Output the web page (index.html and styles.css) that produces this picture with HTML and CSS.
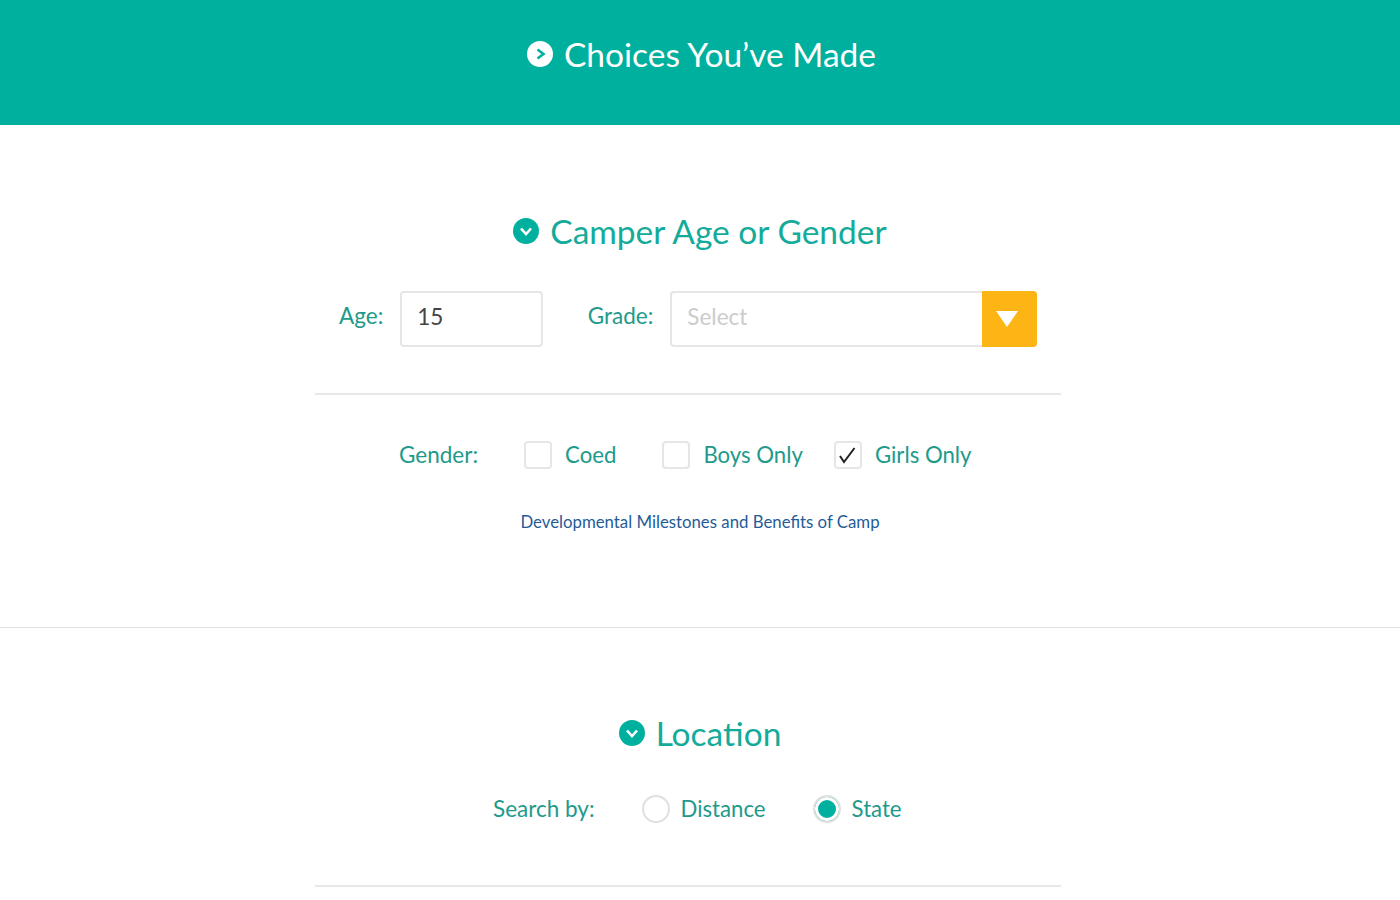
FILE: index.html
```html
<!DOCTYPE html>
<html>
<head>
    <title>Choices You've Made</title>
    <meta charset="UTF-8">
    <meta name="viewport" content="width=device-width, initial-scale=1.0">
    <link rel="stylesheet" href="styles.css">
</head>
<body>
    <header class="page-header">
        <svg class="title-icon" viewBox="0 0 26 26">
            <circle cx="13" cy="13" r="13" fill="#fff"/>
            <path d="M10.5 8.5l6 4.5-6 4.5" fill="none" stroke="#00b09e" stroke-width="2.6"/>
        </svg>
        <h1>Choices You’ve Made</h1>
    </header>

    <section class="section section-age">
        <div class="section-title">
            <svg class="title-icon" viewBox="0 0 26 26">
                <circle cx="13" cy="13" r="13" fill="#00b09e"/>
                <path d="M8 10.5l5 5.5 5-5.5" fill="none" stroke="#fff" stroke-width="2.6"/>
            </svg>
            <h2>Camper Age or Gender</h2>
        </div>

        <div class="panel">
            <div class="age-row">
                <label class="field-label" for="age">Age:</label>
                <input class="age-input" id="age" type="text" value="15">
                <label class="field-label grade-label">Grade:</label>
                <div class="grade-select">
                    <span class="placeholder">Select</span>
                    <span class="select-arrow"></span>
                </div>
            </div>
            <div class="gender-row">
                <span class="field-label gender-label">Gender:</span>
                <span class="check-item coed"><span class="checkbox"></span>Coed</span>
                <span class="check-item boys"><span class="checkbox"></span>Boys Only</span>
                <span class="check-item"><span class="checkbox">
                    <svg viewBox="0 0 28 28"><path d="M6 15l4 6L20.5 7" fill="none" stroke="#222" stroke-width="2"/></svg>
                </span>Girls Only</span>
            </div>
        </div>
        <p class="milestones"><a href="#">Developmental Milestones and Benefits of Camp</a></p>
    </section>

    <section class="section section-location">
        <div class="section-title">
            <svg class="title-icon" viewBox="0 0 26 26">
                <circle cx="13" cy="13" r="13" fill="#00b09e"/>
                <path d="M8 10.5l5 5.5 5-5.5" fill="none" stroke="#fff" stroke-width="2.6"/>
            </svg>
            <h2>Location</h2>
        </div>
        <div class="search-row">
            <span class="field-label search-label">Search by:</span>
            <span class="check-item distance"><span class="radio"></span>Distance</span>
            <span class="check-item"><span class="radio selected"></span>State</span>
        </div>
        <div class="panel panel-rule"></div>
    </section>
</body>
</html>
```

FILE: styles.css
```css
html, body {
    height: 900px;
    overflow: hidden;
}

body {
    font-family: Lato, "Open Sans", sans-serif;
    margin: 0;
    background-color: #fff;
    color: #219a8b;
}

.page-header {
    background-color: #00b09e;
    color: #fff;
    height: 125px;
    display: flex;
    justify-content: center;
    align-items: center;
    gap: 11px;
    padding: 0 0 17px 3px;
    box-sizing: border-box;
}

h1, h2 {
    font-size: 33.5px;
    line-height: 40px;
    font-weight: 400;
    margin: 0;
}

h2 {
    color: #14ab9a;
}

.title-icon {
    width: 26px;
    height: 26px;
    flex-shrink: 0;
}

.section-title {
    display: flex;
    justify-content: center;
    align-items: center;
    gap: 11px;
}

.section {
    box-sizing: border-box;
}

.section-age {
    height: 503px;
    padding-top: 86px;
    border-bottom: 1px solid #e0e0e0;
}

.section-location {
    padding-top: 85px;
}

.panel {
    width: 746px;
    margin-left: 315px;
}

.age-row {
    display: flex;
    align-items: center;
    margin-top: 40px;
    padding: 0 0 46px 24px;
    border-bottom: 2px solid #e8e8e8;
}

.field-label {
    font-size: 22.5px;
    color: #219a8b;
}

.age-row .field-label {
    padding-bottom: 7px;
}

.age-input {
    width: 143px;
    height: 56px;
    box-sizing: border-box;
    margin: 0 0 0 17px;
    padding: 0 15px 5px;
    border: 2px solid #e6e6e6;
    border-radius: 4px;
    font-family: inherit;
    font-size: 22.5px;
    color: #444;
    outline: none;
}

.grade-label {
    margin-left: 44.5px;
}

.grade-select {
    width: 367px;
    height: 56px;
    box-sizing: border-box;
    margin-left: 17px;
    padding-left: 15px;
    border: 2px solid #e6e6e6;
    border-radius: 4px;
    display: flex;
    align-items: center;
    justify-content: space-between;
}

.placeholder {
    font-size: 22.5px;
    color: #ccc;
    padding-bottom: 5px;
}

.select-arrow {
    width: 55px;
    height: 56px;
    margin: -2px;
    background-color: #fdb515;
    border-radius: 0 4px 4px 0;
    display: flex;
    align-items: center;
    justify-content: center;
}

.select-arrow::after {
    content: "";
    margin-right: 5px;
    border-left: 11px solid transparent;
    border-right: 11px solid transparent;
    border-top: 16px solid #fff;
}

.gender-row {
    display: flex;
    align-items: center;
    margin-top: 45px;
    padding-left: 84px;
}

.check-item {
    display: flex;
    align-items: center;
    font-size: 22.2px;
    color: #219a8b;
}

.gender-label {
    margin-right: 46px;
}

.coed {
    margin-right: 46px;
}

.boys {
    margin-right: 31px;
}

.checkbox {
    width: 28px;
    height: 28px;
    box-sizing: border-box;
    margin: 1px 13px -1px 0;
    border: 2px solid #e6e6e6;
    border-radius: 4px;
    display: block;
}

.checkbox svg {
    width: 28px;
    height: 28px;
    margin: -2px;
    display: block;
}

.milestones {
    margin: 44px 0 0;
    text-align: center;
    font-size: 16.8px;
    line-height: 20px;
}

.milestones a {
    color: #1f5c99;
    text-decoration: none;
}

.search-row {
    display: flex;
    align-items: center;
    margin-top: 41px;
    padding-left: 493px;
    height: 28px;
}

.search-label {
    margin-right: 47px;
}

.distance {
    margin-right: 47px;
}

.radio {
    width: 28px;
    height: 28px;
    box-sizing: border-box;
    margin: 1px 11px -1px 0;
    border: 2px solid #e0e0e0;
    border-radius: 50%;
    display: block;
}

.radio.selected {
    background-color: #00b09e;
    box-shadow: inset 0 0 0 3px #fff;
}

.panel-rule {
    margin-top: 63px;
    border-bottom: 2px solid #e8e8e8;
}
```
